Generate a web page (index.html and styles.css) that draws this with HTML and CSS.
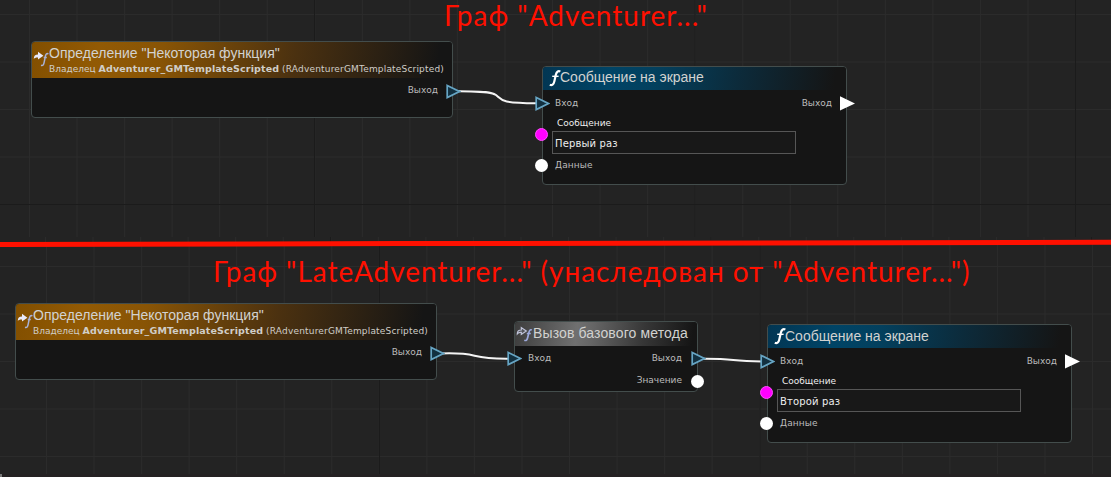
FILE: index.html
```
<!DOCTYPE html>
<html lang="ru">
<head>
<meta charset="utf-8">
<title>Графы</title>
<link rel="stylesheet" href="styles.css">
</head>
<body>
<svg width="0" height="0" class="defs">
  <defs>
    <symbol id="event" viewBox="0 0 17 17">
      <path d="M1.800 9C1.700 5.800 3.200 4.700 6 4.600V1.800L11.400 5.800 6 9.600V7.500C4 7.300 2.700 7.800 1.800 9Z" fill="#e8e9fa"/>
      <path d="M16.400 3.900C14.700 3 13.700 4.300 13.200 7L12.200 12.200C11.700 14.900 10.900 15.900 9 15.300M11.700 7.500H14.800" fill="none" stroke="#a9b2d6" stroke-width="1.500"/>
    </symbol>
    <symbol id="parent" viewBox="0 0 17 17">
      <path d="M1.300 8.800C1.300 6.200 2.700 5 5.300 5V2.600L10.300 6.100 5.300 9.400V7.400C3.500 7.200 2.300 7.500 1.300 8.800Z" fill="#55565c" stroke="#c0c4da" stroke-width="1.200"/>
      <path d="M15.800 5.100C14.200 4.300 13.300 5.300 12.800 8L11.700 12.500C11.200 14.900 10.200 16 8.300 15.300M10.800 8.500H14.800" fill="none" stroke="#9da9dc" stroke-width="1.700"/>
    </symbol>
    <symbol id="func" viewBox="0 0 14 18">
      <path d="M12.300 2.600C10.600 1.400 8.600 2.400 7.900 5.600L6.300 12.400C5.600 15.500 3.900 16.800 1.800 15.800" fill="none" stroke="#fff" stroke-width="2.200"/>
      <path d="M4.200 7.300H10.600" stroke="#fff" stroke-width="1.400"/>
    </symbol>
    <symbol id="exec" viewBox="0 0 15 15"><path d="M1.200 1.400L13.400 7.500 1.200 13.600Z" fill="#123040" stroke="#66a5c4" stroke-width="1.700"/></symbol>
    <symbol id="free" viewBox="0 0 15 15"><path d="M0 .2L15 7.500 0 14.500Z" fill="#fff"/></symbol>
  </defs>
</svg>
<main class="board">
  <section class="panel panel-top"></section>
  <section class="seam"></section>
  <section class="panel panel-bottom"></section>
  <section class="edge"></section>

  <svg class="wires" width="1111" height="477">
    <path class="divider" d="M0 244.500L400 243.600 1111 242.300"/>
    <path class="wire" d="M457 91C474 92 489 90.500 496 95C502 100 500 103 536 103.200"/>
    <path class="wire" d="M441 353.500C482 352 466 359 508 358.700"/>
    <path class="wire" d="M702 358.800C738 358.500 728 361.500 762 361.500"/>
  </svg>

  <h1 class="caption first">Граф "Adventurer..."</h1>
  <h1 class="caption second">Граф "LateAdventurer..." (унаследован от "Adventurer...")</h1>

  <article class="node define define-a">
    <header class="head gold">
      <svg class="ico-event"><use href="#event"/></svg>
      <div><div class="name">Определение "Некоторая функция"</div>
      <div class="owner">Владелец <b>Adventurer_GMTemplateScripted</b> <span>(RAdventurerGMTemplateScripted)</span></div></div>
    </header>
    <div class="ports"><span></span><span>Выход</span></div>
    <svg class="pin out"><use href="#exec"/></svg>
  </article>

  <article class="node define define-b">
    <header class="head gold">
      <svg class="ico-event"><use href="#event"/></svg>
      <div><div class="name">Определение "Некоторая функция"</div>
      <div class="owner">Владелец <b>Adventurer_GMTemplateScripted</b> <span>(RAdventurerGMTemplateScripted)</span></div></div>
    </header>
    <div class="ports"><span></span><span>Выход</span></div>
    <svg class="pin out"><use href="#exec"/></svg>
  </article>

  <article class="node message message-a">
    <header class="head blue"><svg class="ico-func"><use href="#func"/></svg><div class="name">Сообщение на экране</div></header>
    <div class="ports"><span>Вход</span><span>Выход</span></div>
    <div class="label">Сообщение</div>
    <div class="field">Первый раз</div>
    <div class="data">Данные</div>
    <svg class="pin in"><use href="#exec"/></svg>
    <svg class="pin out"><use href="#free"/></svg>
    <i class="dot pink"></i><i class="dot white"></i>
  </article>

  <article class="node message message-b">
    <header class="head blue"><svg class="ico-func"><use href="#func"/></svg><div class="name">Сообщение на экране</div></header>
    <div class="ports"><span>Вход</span><span>Выход</span></div>
    <div class="label">Сообщение</div>
    <div class="field">Второй раз</div>
    <div class="data">Данные</div>
    <svg class="pin in"><use href="#exec"/></svg>
    <svg class="pin out"><use href="#free"/></svg>
    <i class="dot pink"></i><i class="dot white"></i>
  </article>

  <article class="node call">
    <header class="head gray"><svg class="ico-event"><use href="#parent"/></svg><div class="name">Вызов базового метода</div></header>
    <div class="ports"><span>Вход</span><span>Выход</span></div>
    <div class="ports value"><span></span><span>Значение</span></div>
    <svg class="pin in"><use href="#exec"/></svg>
    <svg class="pin out"><use href="#exec"/></svg>
    <i class="dot white"></i>
  </article>
</main>
</body>
</html>
```
FILE: styles.css
```
* { box-sizing: border-box; }
body { margin: 0; background: #232323; overflow: hidden; }
.defs { position: absolute; }
.board { position: relative; width: 1111px; height: 477px; display: flex; flex-direction: column; font: 9px/12px "DejaVu Sans", sans-serif; color: #bcbcbc; }

/* grid background: a dark major line over the lighter minor lines */
.panel, .seam {
  background-color: #232323;
  background-image:
    linear-gradient(90deg, #1b1b1b 1px, transparent 1px),
    linear-gradient(#1b1b1b 1px, transparent 1px),
    linear-gradient(90deg, #2b2b2b 1px, transparent 1px),
    linear-gradient(#2b2b2b 1px, transparent 1px);
  background-size: 380.500px 100%, 100% 380px, 47.560px 100%, 100% 47.500px;
}
.panel-top { height: 237px; background-position: 314px 0, 0 204px, 29px 0, 0 14px; }
.seam { height: 6px; background-position: 330px 0, 0 100px, 45px 0, 0 20px; }
.panel-bottom { height: 231px; background-position: 379px 0, 0 300px, 46px 0, 0 23px; }
.edge { height: 3px; background: linear-gradient(90deg, #777 2px, #242122 2px); }

.wires { position: absolute; left: 0; top: 0; }
.divider { fill: none; stroke: #ff1000; stroke-width: 5; }
.wire { fill: none; stroke: #f4f4f4; stroke-width: 2; }

.caption { position: absolute; margin: 0; font: 28px/34px Lato, sans-serif; color: #ff1000; white-space: nowrap; }
.first { left: 444px; top: -2px; letter-spacing: 1px; }
.second { left: 213px; top: 254px; letter-spacing: .96px; }

.node { position: absolute; background: #151515; border: 1px solid #434d4c; border-radius: 4px; white-space: nowrap; }
.define { width: 422px; height: 77px; }
.define-a { left: 31px; top: 41px; }
.define-b { left: 15px; top: 303px; }
.message { width: 305px; height: 119px; }
.message-a { left: 542px; top: 66px; }
.message-b { left: 767px; top: 324px; }
.call { left: 514px; top: 321px; width: 184px; height: 71px; }

.head { display: flex; height: 23px; border-radius: 3px 3px 0 0; }
.name { font: 14px/18px "Liberation Sans", sans-serif; color: #d2d2d0; padding-top: 1px; }
.gold { height: 36px; background: linear-gradient(100deg, #824f00 0, #925a04 16%, #885405 31%, #4b3110 62%, #151515 96%); }
.gold .name { padding-top: 2px; height: 20px; }
.blue { background: linear-gradient(98deg, #023653 0, #004466 22%, #03405e 37%, #0c2b3b 64%, #151515 96%); }
.message-b .name { padding-top: 2px; }
.gray { background: linear-gradient(98deg, #3d3d3d 0, #707070 34%, #666 42%, #373737 70%, #151515 97%); height: 24px; }
.gray .name { letter-spacing: .12px; padding-top: 2px; }
.owner { color: #d0cec8; line-height: 13px; }
.owner b { font: bold 9.500px/13px "DejaVu Sans", sans-serif; letter-spacing: .14px; }
.owner span { letter-spacing: .18px; }

.ico-event { width: 17px; height: 17px; flex: none; margin-top: 8px; }
.gray .ico-event { margin: 3px 0 0 1px; }
.ico-func { width: 14px; height: 18px; flex: none; margin: 2px 0 0 5px; }
.blue .name { margin-left: -2px; }

.ports { display: flex; justify-content: space-between; }
.define .ports { padding: 6px 14px 0 0; }
.message .ports { padding: 7px 14px 0 12px; }
.call .ports { padding: 6px 15px 0 13px; }
.call .value { padding-top: 10px; }
.label { padding: 8px 0 0 14px; color: #eee; }
.field { margin: 2px 0 0 9px; width: 244px; height: 23px; border: 1px solid #565656; background: #181818; font-size: 10px; line-height: 23px; padding-left: 2px; color: #eee; letter-spacing: .15px; }
.data { padding: 5px 0 0 12px; letter-spacing: .1px; }

.pin { position: absolute; width: 15px; height: 15px; }
.define .out { right: -9px; top: 42px; }
.message .in { left: -8px; top: 29px; }
.message .out { right: -9px; top: 29px; }
.call .in { left: -8px; top: 29px; }
.call .out { right: -9px; top: 29px; }
.dot { position: absolute; width: 13px; height: 13px; border-radius: 50%; }
.pink { left: -8px; top: 61px; background: #ff00ff; border: 1px solid #ff4cff; }
.white { left: -8px; top: 92px; background: #fff; }
.call .white { left: auto; right: -7px; top: 53px; }
```
